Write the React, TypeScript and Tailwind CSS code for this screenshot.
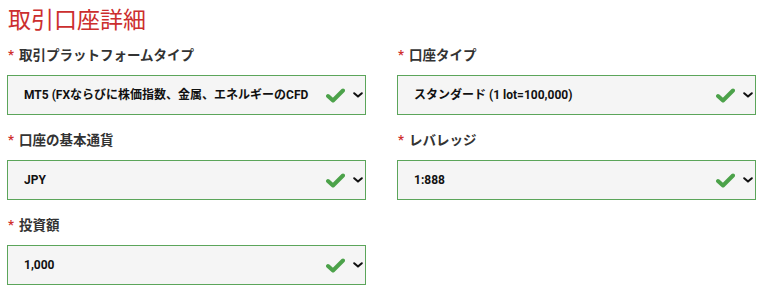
import React from 'react';

type Field = { label: string; value: string };

const rows: Field[][] = [
  [
    { label: '取引プラットフォームタイプ', value: 'MT5 (FXならびに株価指数、金属、エネルギーのCFD' },
    { label: '口座タイプ', value: 'スタンダード (1 lot=100,000)' },
  ],
  [
    { label: '口座の基本通貨', value: 'JPY' },
    { label: 'レバレッジ', value: '1:888' },
  ],
  [{ label: '投資額', value: '1,000' }],
];

function Check() {
  return (
    <svg width="19" height="15" viewBox="0 0 19 15" className="shrink-0">
      <path d="M2 8 L7 12.5 L17 2.5" fill="none" stroke="#4ca24a" strokeWidth="4" strokeLinecap="round" strokeLinejoin="round" />
    </svg>
  );
}

function Chevron() {
  return (
    <svg width="10" height="6" viewBox="0 0 10 6" className="shrink-0">
      <path d="M1.2 1.2 L5 4.6 L8.8 1.2" fill="none" stroke="#111" strokeWidth="2" strokeLinecap="round" strokeLinejoin="round" />
    </svg>
  );
}

function SelectField({ label, value }: Field) {
  return (
    <div className="flex flex-col">
      <div className="h-[20px] flex items-center gap-[5px] pl-[1px] text-[13.5px] font-bold text-[#333]">
        <span className="text-[#d0312d] text-[13px]">*</span>
        <span>{label}</span>
      </div>
      <div className="mt-[10px] h-[40px] border border-[#5ba55a] bg-[#f5f5f5] flex items-center pl-[16px] pr-[2px]">
        <span className="flex-1 min-w-0 overflow-hidden whitespace-nowrap text-[12px] font-bold text-[#111] pr-[12px]">{value}</span>
        <Check />
        <div className="ml-[8px]">
          <Chevron />
        </div>
      </div>
    </div>
  );
}

export default function App() {
  return (
    <div
      className="w-[773px] h-[302px] bg-white pl-[7px] pt-[4px] overflow-hidden"
      style={{ fontFamily: 'Roboto, "Noto Sans CJK JP", sans-serif' }}
    >
      <h2 className="text-[23px] leading-[34px] text-[#cc2e2e] pl-[1px] mb-[7px]">取引口座詳細</h2>
      <div className="flex flex-col gap-[15px]">
        {rows.map((row, i) => (
          <div key={i} className="grid grid-cols-[359px_359px] gap-x-[31px]">
            {row.map((f) => (
              <SelectField key={f.label} label={f.label} value={f.value} />
            ))}
          </div>
        ))}
      </div>
    </div>
  );
}
